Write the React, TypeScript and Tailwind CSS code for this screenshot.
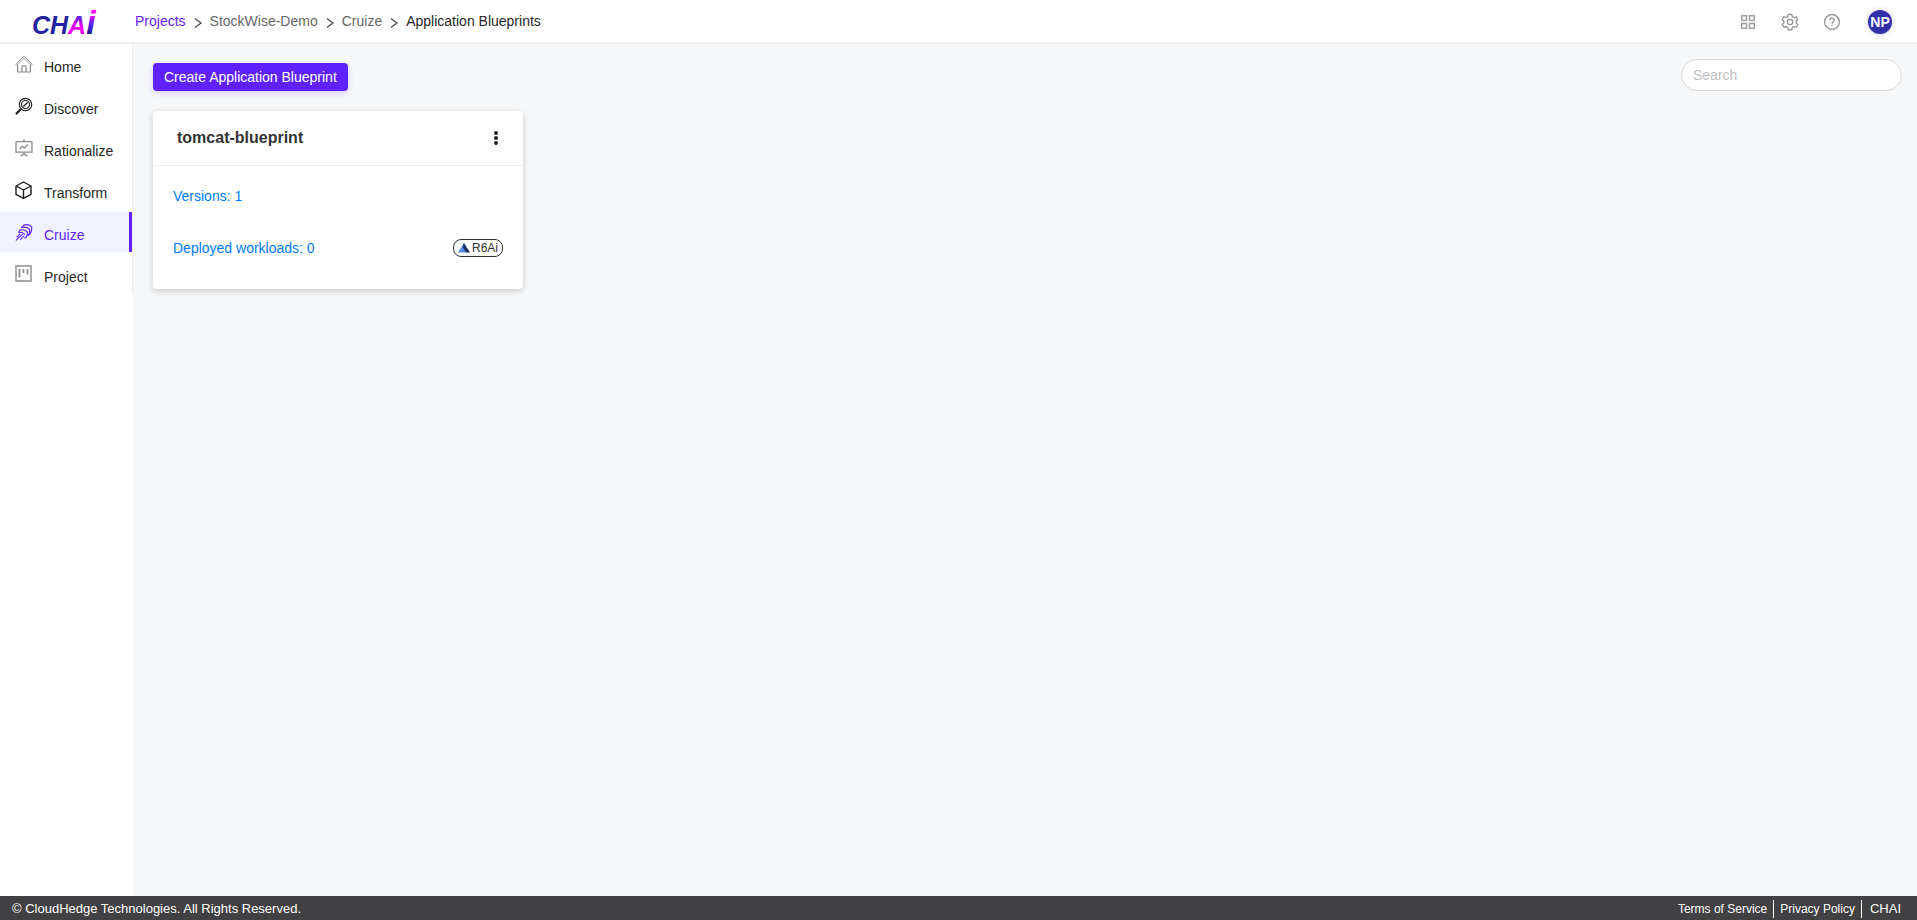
import React, { useState } from "react";

interface NavItem {
  id: string;
  label: string;
  icon: React.ReactNode;
}

const HomeIcon = () => (
  <svg width="18" height="18" viewBox="0 0 18 18" fill="none" stroke="#8c8c8c" strokeWidth="1.2">
    <path d="M0.8 9.2 9 1l8.2 8.2-1 1L9 3.2 1.8 10.2z" strokeWidth="0.9" />
    <path d="M2.6 9.4v7.6h4.4v-6h4v6h4.4V9.4M7 17h4" />
  </svg>
);

const DiscoverIcon = () => (
  <svg width="18" height="18" viewBox="0 0 18 18" fill="none" stroke="#262626" strokeWidth="1.2">
    <circle cx="10.5" cy="7.5" r="6.2" />
    <circle cx="10.5" cy="7.5" r="4" />
    <path d="M8.4 9.6 12.6 5.4" strokeWidth="1.4" />
    <path d="M6 12 .9 17.100" strokeWidth="2.2" />
  </svg>
);

const RationalizeIcon = () => (
  <svg width="18" height="18" viewBox="0 0 18 18" fill="none" stroke="#8c8c8c" strokeWidth="1.3">
    <path d="M1 2.6h16v10.6H1zM9 .2v2.4M9 13.2v1.4M5.4 17.2l3.6-2.6 3.6 2.6" />
    <path d="M4.8 9.8l2.4-2.4 2 1.8 3.8-3.8" />
  </svg>
);

const TransformIcon = () => (
  <svg width="18" height="18" viewBox="0 0 18 18" fill="none" stroke="#1f1f1f" strokeWidth="1.4" strokeLinejoin="round">
    <path d="M8.500 1 16 5v8.400l-7.500 4-7.500-4V5z" />
    <path d="M1 5l7.500 4L16 5M8.500 9v8.400" />
  </svg>
);

const CruizeIcon = () => (
  <svg width="18" height="18" viewBox="0 0 18 18" fill="none" stroke="#5f22ff" strokeWidth="1.1" strokeLinecap="round" strokeLinejoin="round">
    <path d="M9 2c3-.8 5.600-.2 7.800 1.800.2 2.400-.2 4.800-1.600 6.800" />
    <path d="M6.800 4.400c3-.7 5.600 0 7.800 2 .2 2.200-.2 4.200-1.400 6" />
    <path d="M5 7c2.800-.7 5.400.1 7.400 2 .2 1.900-.1 3.700-1.200 5.400" />
    <path d="M3.800 9.400c2.200-.5 4.200.2 5.800 1.800" />
    <path d="M9 2 6.800 4.400M5 7 3.800 9.400M15.200 10.600l-2 1.800M11.200 14.400l-1.600.6" />
    <path d="M7.400 11.400 1.200 17.200M5 11.200 2 14M8.800 13.200l-3.200 3.200" />
  </svg>
);

const ProjectIcon = () => (
  <svg width="18" height="18" viewBox="0 0 18 18" fill="none" stroke="#8c8c8c" strokeWidth="1.4">
    <path d="M1 1h15v15H1z" />
    <path d="M4.5 4v8.5M8.5 4v4M12.500 4v5.5" strokeWidth="1.7" />
  </svg>
);

const Logo = () => (
  <svg width="70" height="42" viewBox="0 0 70 42" role="img" aria-label="CHAi">
    <defs>
      <linearGradient id="logoA" gradientUnits="userSpaceOnUse" x1="0" y1="16" x2="0" y2="34">
        <stop offset="0" stopColor="#4a22e0" />
        <stop offset="0.5" stopColor="#e000f8" />
        <stop offset="1" stopColor="#ff00ff" />
      </linearGradient>
      <linearGradient id="logoI" gradientUnits="userSpaceOnUse" x1="0" y1="9" x2="0" y2="34">
        <stop offset="0.2" stopColor="#ff00f0" />
        <stop offset="0.6" stopColor="#5a22f0" />
        <stop offset="1" stopColor="#1c1c8c" />
      </linearGradient>
    </defs>
    <text y="34" fontSize="25" fontWeight="bold" fontStyle="italic">
      <tspan fill="#2222a0">CH</tspan>
      <tspan fill="url(#logoA)">A</tspan>
      <tspan fill="url(#logoI)" fontSize="34">i</tspan>
    </text>
  </svg>
);

const navItems: NavItem[] = [
  { id: "home", label: "Home", icon: <HomeIcon /> },
  { id: "discover", label: "Discover", icon: <DiscoverIcon /> },
  { id: "rationalize", label: "Rationalize", icon: <RationalizeIcon /> },
  { id: "transform", label: "Transform", icon: <TransformIcon /> },
  { id: "cruize", label: "Cruize", icon: <CruizeIcon /> },
  { id: "project", label: "Project", icon: <ProjectIcon /> },
];

const Separator = () => (
  <svg className="mt-1" width="8" height="12" viewBox="0 0 8 12" fill="none" stroke="#444" strokeWidth="1.2" aria-hidden="true">
    <path d="M1 1.5 7 6 1 10.5" />
  </svg>
);

const Header = () => (
  <header className="flex h-11 items-center border-b-2 border-[#eeeeee] bg-white">
    <a href="#" className="flex w-[135px] shrink-0 pl-8">
      <Logo />
    </a>
    <nav aria-label="Breadcrumb" className="flex grow items-center gap-2 text-sm text-[#666666]">
      <a href="#projects" className="text-[#5f22ff]">Projects</a>
      <Separator />
      <a href="#stockwise">StockWise-Demo</a>
      <Separator />
      <a href="#cruize">Cruize</a>
      <Separator />
      <span className="text-[#262626]">Application Blueprints</span>
    </nav>
    <div className="flex items-center gap-6 pt-0.5 pr-[25px]">
      <button aria-label="Apps">
        <svg width="18" height="18" viewBox="0 0 18 18" fill="none" stroke="#a0a0a0" strokeWidth="1.5">
          <path d="M2.7 2.7h4.8v4.8H2.7zM10.5 2.7h4.8v4.8h-4.8zM2.7 10.5h4.8v4.8H2.7zM10.5 10.5h4.8v4.8h-4.8z" />
        </svg>
      </button>
      <button aria-label="Settings">
        <svg width="18" height="18" viewBox="0 0 18 18" fill="none" stroke="#8c8c8c" strokeWidth="1.2" strokeLinejoin="round">
          <path d="M7.3 1.3h3.4l.5 2.2 1.7 1 2.2-.7 1.7 2.9-1.7 1.5v1.7l1.7 1.5-1.7 2.9-2.2-.7-1.7 1-.5 2.2H7.3l-.5-2.2-1.7-1-2.2.7-1.7-2.9 1.7-1.5V8.2L1.2 6.7l1.7-2.9 2.2.7 1.7-1z" />
          <circle cx="9" cy="9" r="2.7" />
        </svg>
      </button>
      <button aria-label="Help">
        <svg width="18" height="18" viewBox="0 0 18 18" fill="none" stroke="#8c8c8c" strokeWidth="1.2">
          <circle cx="9" cy="9" r="7.4" />
          <path d="M6.7 7.2c0-3 4.7-2.8 4.6-.1 0 1.7-2.3 1.6-2.3 3.7M9 12v1.3" />
        </svg>
      </button>
      <button className="ml-[3px] flex size-6 items-center justify-center rounded-full bg-[#3030a8] text-sm font-bold text-white shadow-[0_0_4px_1px_rgba(0,0,0,0.15)]">
        NP
      </button>
    </div>
  </header>
);

const Sidebar = () => {
  const [active, setActive] = useState("cruize");

  return (
    <aside className="w-[133px] shrink-0 bg-white">
      <nav className="flex flex-col gap-0.5 border-r border-[#eeeeee]">
        {navItems.map((item) => (
          <button
            key={item.id}
            onClick={() => setActive(item.id)}
            className={`flex h-10 items-center gap-[11px] border-r-3 pl-[15px] text-sm ${
              active === item.id
                ? "border-[#5f22ff] bg-[#f0f2ff] text-[#5f22ff]"
                : "border-transparent text-[#262626]"
            }`}>
            {item.icon}
            <span className="pt-1.5">{item.label}</span>
          </button>
        ))}
      </nav>
    </aside>
  );
};

const BlueprintCard = () => (
  <article className="w-[370px] rounded bg-white shadow-[0_2px_6px_rgba(0,0,0,0.18)]">
    <div className="flex h-[55px] items-center justify-between border-b border-[#eeeeee] pr-5 pl-6">
      <h2 className="text-base font-bold text-[#333333]">tomcat-blueprint</h2>
      <button aria-label="More actions">
        <svg width="14" height="16" viewBox="0 0 14 16" fill="#222">
          <circle cx="7" cy="3" r="2" />
          <circle cx="7" cy="8" r="2" />
          <circle cx="7" cy="13" r="2" />
        </svg>
      </button>
    </div>
    <div className="flex flex-col gap-8 px-5 pt-5 pb-[31px] text-sm text-[#007bff]">
      <a href="#versions">Versions: 1</a>
      <div className="flex items-center justify-between">
        <a href="#workloads">Deployed workloads: 0</a>
        <span className="flex h-[18px] items-center gap-0.5 rounded-lg border border-[#333333] px-1 text-xs text-[#333333]">
          <svg width="12" height="10" viewBox="0 0 12 10">
            <path d="M6 0 0 9.5h8z" fill="#5b8def" />
            <path d="M6 0 4.5 4 8 9.5h4z" fill="#1d3266" />
          </svg>
          R6Ai
        </span>
      </div>
    </div>
  </article>
);

const Footer = () => (
  <footer className="flex h-6 items-center justify-between bg-[#414042] pt-px pr-4 pl-3 text-[13px] text-white">
    <p>© CloudHedge Technologies. All Rights Reserved.</p>
    <div className="flex items-center">
      <a href="#terms" className="border-r border-white pr-1.5 text-xs leading-[18px]">Terms of Service</a>
      <a href="#privacy" className="border-r border-white px-1.5 text-xs leading-[18px]">Privacy Policy</a>
      <span className="pl-2">CHAI</span>
    </div>
  </footer>
);

export default function App() {
  const [search, setSearch] = useState("");

  return (
    <div className="flex min-h-screen flex-col bg-[#f5f7f9] font-['Liberation_Sans',Arial,sans-serif]">
      <Header />
      <div className="flex grow">
        <Sidebar />
        <main className="grow pt-[15px] pr-[15px] pl-5">
          <div className="mb-5 flex items-start justify-between">
            <button className="mt-1 h-7 rounded bg-[#5f22ff] px-[11px] text-sm text-white shadow-[0_2px_6px_rgba(95,34,255,0.2)]">
              Create Application Blueprint
            </button>
            <input
              type="search"
              aria-label="Search"
              placeholder="Search"
              value={search}
              onChange={(e) => setSearch(e.target.value)}
              className="h-8 w-[221px] rounded-full border border-[#d9d9d9] bg-white px-[11px] text-sm outline-none placeholder:text-[#bfbfbf]"
            />
          </div>
          <BlueprintCard />
        </main>
      </div>
      <Footer />
    </div>
  );
}
